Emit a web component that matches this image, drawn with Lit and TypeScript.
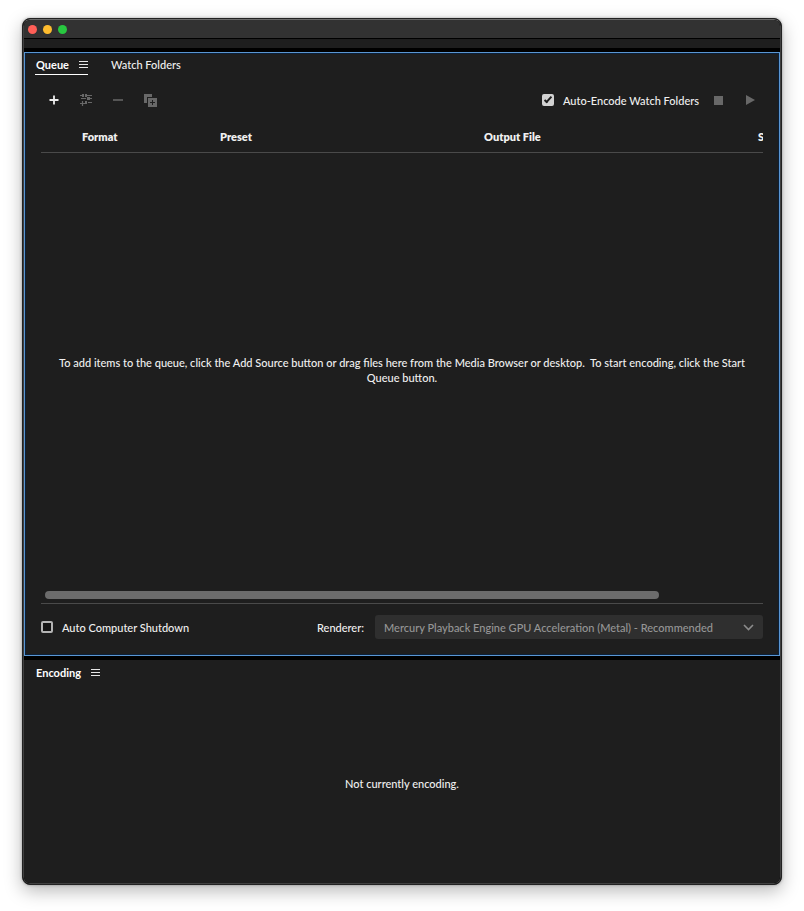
import { LitElement, html, css, svg } from "lit";
import { customElement, property } from "lit/decorators.js";

const menuIcon = svg`<path d="M0 .5h9M0 3.5h9M0 6.5h9" stroke="currentColor"/>`;

@customElement("panel-menu")
class PanelMenu extends LitElement {
  @property() label = "";
  static styles = css`
    :host { display: block; }
    .menu { display: block; border: 0; padding: 0; background: none; color: #e6e6e6; }
    svg { display: block; }
  `;
  render() {
    return html`<button class="menu" aria-label=${this.label}>
      <svg width="9" height="7" viewBox="0 0 9 7">${menuIcon}</svg>
    </button>`;
  }
}

@customElement("app-root")
class AppRoot extends LitElement {
  static styles = css`
    :host {
      display: flex;
      box-sizing: border-box;
      min-height: 100vh;
      padding: 18px 22px 26px;
      background: #fff;
      color: #f0f0f0;
      font: 500 11px/15px Lato, "Noto Sans", sans-serif;
    }
    * { box-sizing: border-box; }
    button, select, input { font: inherit; color: inherit; margin: 0; }
    svg { display: block; }
    .window {
      flex: 1;
      min-width: 0;
      display: flex;
      flex-direction: column;
      border: 1px solid #222;
      border-radius: 8px;
      background: #000;
      overflow: hidden;
      box-shadow: 0 6px 18px rgba(0, 0, 0, 0.28), 0 0 3px rgba(0, 0, 0, 0.3);
    }
    .frame {
      flex: 1;
      display: flex;
      flex-direction: column;
      border: 1px solid #404040;
      border-top-color: #6c6c6c;
      border-radius: 7px;
      overflow: hidden;
    }
    .titlebar {
      height: 18px;
      padding: 0 0 0 4px;
      display: flex;
      gap: 6px;
      align-items: center;
      background: #323232;
    }
    .light { width: 9px; height: 9px; padding: 0; border: 0; border-radius: 50%; }
    .close { background: #ff5f57; }
    .minimize { background: #febc2e; }
    .zoom { background: #28c840; }
    .strip { height: 9px; margin: 1px 0 4px; background: #1e1e1e; }
    .queue {
      flex: 1;
      display: flex;
      flex-direction: column;
      padding: 0 16px 16px;
      background: #1e1e1e;
      border: 1px solid #5a96d2;
      box-shadow: inset 0 0 0 1px #0c2038;
    }
    .tabs { display: flex; gap: 22px; margin-left: -6px; }
    .tab { display: flex; align-items: center; gap: 10px; height: 22px; padding: 2px 0 0 1px; border-bottom: 1px solid transparent; }
    .tab.active { border-color: #fff; color: #fff; }
    .tabname { padding: 0; border: 0; background: none; }
    .active .tabname, .title { font-weight: 700; }
    .toolbar { display: flex; align-items: center; height: 24px; margin-top: 13px; padding: 0 4px; }
    .tool { width: 18px; height: 18px; padding: 0; border: 0; background: none; display: grid; place-items: center; color: #686868; margin-right: 14px; }
    .tool.add { color: #eee; }
    .tool.stop { margin-left: 10px; }
    .tool.last { margin-right: 0; }
    .check { display: flex; align-items: center; gap: 9px; }
    .right { margin-left: auto; }
    .box {
      appearance: none;
      width: 12px;
      height: 12px;
      border: 2px solid #b4b4b4;
      border-radius: 2px;
      background: #141414;
      display: grid;
      place-items: center;
    }
    .box:checked { background: #d2d2d2; border-color: #d2d2d2; }
    .box:checked::before {
      content: "";
      width: 6px;
      height: 2px;
      border: solid #1e1e1e;
      border-width: 0 0 2px 2px;
      rotate: -48deg;
      translate: 0 -1px;
    }
    .list { flex: 1; display: flex; flex-direction: column; overflow: hidden; margin-top: 11px; border-bottom: 1px solid #4a4a4a; }
    .grid { width: 850px; table-layout: fixed; border-collapse: collapse; }
    th { height: 29px; padding: 0 0 2px; text-align: left; font-weight: 800; border-bottom: 1px solid #4a4a4a; }
    .c0 { width: 41px; }
    .c1 { width: 138px; }
    .c2 { width: 264px; }
    .c3 { width: 274px; }
    .empty { flex: 1; display: flex; align-items: center; justify-content: center; margin: 0; padding: 0 16px 4px; text-align: center; }
    .track { padding: 0 4px 4px; }
    .thumb { width: 86%; height: 8px; border-radius: 4px; background: #6c6c6c; }
    .footer { display: flex; align-items: center; justify-content: space-between; margin-top: 11px; }
    .renderer { display: flex; align-items: center; gap: 11px; }
    .select { position: relative; display: block; }
    select { appearance: none; width: 388px; max-width: 100%; height: 24px; padding: 0 9px; border: 0; border-radius: 3px; background: #2f2f2f; color: #969696; opacity: 1; }
    .chevron { position: absolute; right: 9px; top: 9px; color: #8c8c8c; pointer-events: none; }
    .encoding { height: 223px; margin-top: 4px; padding: 5px 12px 0; background: #1e1e1e; display: flex; flex-direction: column; }
    .head { display: flex; align-items: center; gap: 10px; }
    .title { margin: 0; font-size: 11px; line-height: 15px; color: #fff; }
    .status { flex: 1; display: grid; place-items: center; margin: 0; padding-top: 4px; }
  `;

  render() {
    return html`<main class="window"><div class="frame">
      <header class="titlebar">
        <button class="light close" aria-label="Close"></button>
        <button class="light minimize" aria-label="Minimize"></button>
        <button class="light zoom" aria-label="Zoom"></button>
      </header>
      <div class="strip"></div>
      <section class="queue">
        <nav class="tabs">
          <div class="tab active"><button class="tabname">Queue</button><panel-menu label="Queue menu"></panel-menu></div>
          <div class="tab"><button class="tabname">Watch Folders</button></div>
        </nav>
        <div class="toolbar">
          <button class="tool add" aria-label="Add Source">
            <svg width="10" height="10" viewBox="0 0 10 10"><path d="M5 .5v9M.5 5h9" stroke="currentColor" stroke-width="1.8"/></svg>
          </button>
          <button class="tool" aria-label="Add Output">
            <svg width="14" height="14" viewBox="0 0 14 14" fill="none" stroke="currentColor"><path d="M1 2.5h2M8 2.5h5M2 5.5h5M11 5.5h2M9 9.5h4M3.5 8v5M1 10.5h5" stroke-width="1.2"/><path d="M3 1h2v3H3zM6 1h2v3H6zM8 4h3v3H8zM6 8h2v3H6z" fill="currentColor" stroke="none"/></svg>
          </button>
          <button class="tool" aria-label="Remove">
            <svg width="10" height="10" viewBox="0 0 10 10"><path d="M0 5h10" stroke="currentColor" stroke-width="1.6"/></svg>
          </button>
          <button class="tool" aria-label="Duplicate">
            <svg width="14" height="14" viewBox="0 0 14 14"><path d="M1 1h8v3H4v6H1z" fill="currentColor"/><path d="M5 5h9v9H5z" fill="currentColor"/><path d="M9.500 7v5M7 9.500h5" stroke="#1e1e1e"/></svg>
          </button>
          <label class="check right"><input class="box" type="checkbox" checked />Auto-Encode Watch Folders</label>
          <button class="tool stop" aria-label="Stop Queue">
            <svg width="9" height="9" viewBox="0 0 9 9"><path d="M0 0h9v9H0z" fill="currentColor"/></svg>
          </button>
          <button class="tool last" aria-label="Start Queue">
            <svg width="9" height="10" viewBox="0 0 9 10"><path d="M0 0v10l9-5z" fill="currentColor"/></svg>
          </button>
        </div>
        <div class="list">
          <table class="grid">
            <thead><tr><th class="c0"></th><th class="c1">Format</th><th class="c2">Preset</th><th class="c3">Output File</th><th>Status</th></tr></thead>
          </table>
          <p class="empty">To add items to the queue, click the Add Source button or drag files here from the Media Browser or desktop.&nbsp; To start encoding, click the Start Queue button.</p>
          <div class="track"><div class="thumb"></div></div>
        </div>
        <footer class="footer">
          <label class="check"><input class="box" type="checkbox" />Auto Computer Shutdown</label>
          <div class="renderer">
            <label for="renderer">Renderer:</label>
            <span class="select">
              <select id="renderer" disabled><option>Mercury Playback Engine GPU Acceleration (Metal) - Recommended</option></select>
              <svg class="chevron" width="11" height="7" viewBox="0 0 11 7"><path d="M1 1l4.500 4.500L10 1" fill="none" stroke="currentColor" stroke-width="1.6"/></svg>
            </span>
          </div>
        </footer>
      </section>
      <section class="encoding">
        <div class="head"><h2 class="title">Encoding</h2><panel-menu label="Encoding menu"></panel-menu></div>
        <p class="status">Not currently encoding.</p>
      </section>
    </div></main>`;
  }
}
